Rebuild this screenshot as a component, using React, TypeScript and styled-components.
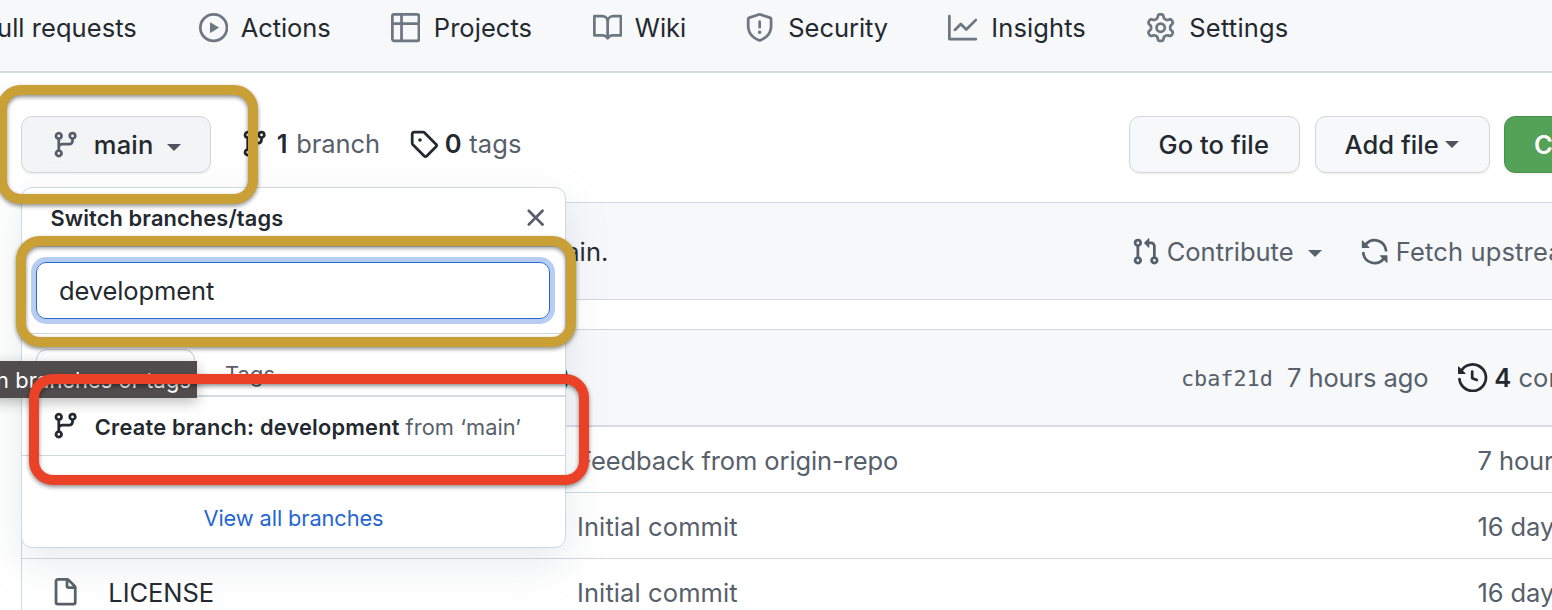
import React from "react";
import styled, { createGlobalStyle, css } from "styled-components";

const GlobalStyle = createGlobalStyle`
  * { box-sizing: border-box; }
  html, body { margin: 0; overflow: hidden; background: #fff; }
  body { font-family: Inter, "Liberation Sans", sans-serif; font-size: 25.5px; color: #24292f; }
`;

const color = {
  fg: "#24292f",
  muted: "#57606a",
  icon: "#6e7781",
  border: "#d0d7de",
  subtle: "#f6f8fa",
  link: "#2566d2",
};

const paths = {
  branch:
    "M11.75 2.5a.75.75 0 100 1.5.75.75 0 000-1.5zm-2.25.75a2.25 2.25 0 113 2.122V6A2.5 2.5 0 0110 8.5H6a1 1 0 00-1 1v1.128a2.251 2.251 0 11-1.5 0V5.372a2.25 2.25 0 111.5 0v1.836A2.492 2.492 0 016 7h4a1 1 0 001-1v-.628A2.25 2.25 0 019.5 3.25zM4.25 12a.75.75 0 100 1.5.75.75 0 000-1.5zM3.5 3.25a.75.75 0 111.5 0 .75.75 0 01-1.5 0z",
  play: "M1.5 8a6.5 6.5 0 1113 0 6.5 6.5 0 01-13 0zM8 0a8 8 0 100 16A8 8 0 008 0zM6.379 5.227A.25.25 0 006 5.442v5.117a.25.25 0 00.379.214l4.264-2.559a.25.25 0 000-.428L6.379 5.227z",
  table:
    "M1.75 0A1.75 1.75 0 000 1.75v12.5C0 15.216.784 16 1.75 16h12.5A1.75 1.75 0 0016 14.25V1.75A1.75 1.75 0 0014.25 0H1.75zM1.5 1.75a.25.25 0 01.25-.25H5V5H1.5V1.75zM6.5 1.5V5h8V1.75a.25.25 0 00-.25-.25H6.5zM14.5 6.5h-8v8h7.75a.25.25 0 00.25-.25V6.5zM5 14.5v-8H1.5v7.75c0 .138.112.25.25.25H5z",
  book: "M0 1.75A.75.75 0 01.75 1h4.253c1.227 0 2.317.59 3 1.501A3.744 3.744 0 0111.006 1h4.245a.75.75 0 01.75.75v10.5a.75.75 0 01-.75.75h-4.507a2.25 2.25 0 00-1.591.659l-.622.621a.75.75 0 01-1.06 0l-.622-.621A2.25 2.25 0 005.258 13H.75a.75.75 0 01-.75-.75V1.75zm8.755 3a2.25 2.25 0 012.25-2.25H14.5v9h-3.757c-.71 0-1.4.201-1.992.572l.004-7.322zm-1.504 7.324l.004-5.073-.002-2.253A2.25 2.25 0 005.003 2.5H1.5v9h3.757a3.75 3.75 0 011.994.574z",
  shield:
    "M7.467.133a1.75 1.75 0 011.066 0l5.25 1.68A1.75 1.75 0 0115 3.48V7c0 1.566-.32 3.182-1.303 4.682-.983 1.498-2.585 2.813-5.032 3.855a1.7 1.7 0 01-1.33 0c-2.447-1.042-4.049-2.357-5.032-3.855C1.32 10.182 1 8.566 1 7V3.48a1.75 1.75 0 011.217-1.667l5.25-1.68zm.61 1.429a.25.25 0 00-.153 0l-5.25 1.68a.25.25 0 00-.174.238V7c0 1.358.275 2.666 1.057 3.86.784 1.194 2.121 2.34 4.366 3.297a.2.2 0 00.154 0c2.245-.956 3.582-2.104 4.366-3.298C13.225 9.666 13.5 8.36 13.5 7V3.48a.25.25 0 00-.174-.237l-5.25-1.68zM9 10.5a1 1 0 11-2 0 1 1 0 012 0zm-.25-5.75a.75.75 0 10-1.5 0v3a.75.75 0 001.5 0v-3z",
  graph:
    "M1.5 1.75a.75.75 0 00-1.5 0v12.5c0 .414.336.75.75.75h14.5a.75.75 0 000-1.5H1.5V1.75zm14.28 2.53a.75.75 0 00-1.06-1.06L10 7.94 7.53 5.47a.75.75 0 00-1.06 0L3.22 8.72a.75.75 0 001.06 1.06L7 7.06l2.47 2.47a.75.75 0 001.06 0l5.25-5.25z",
  gear: "M7.429 1.525a6.593 6.593 0 011.142 0c.036.003.108.036.137.146l.289 1.105c.147.56.55.967.997 1.189.174.086.341.183.501.29.417.278.97.423 1.53.27l1.102-.303c.11-.03.175.016.195.046.219.31.41.641.573.989.014.031.022.11-.059.19l-.815.806c-.411.406-.562.957-.53 1.456a4.588 4.588 0 010 .582c-.032.499.119 1.05.53 1.456l.815.806c.08.08.073.159.059.19a6.494 6.494 0 01-.573.99c-.02.029-.086.074-.195.045l-1.103-.303c-.559-.153-1.112-.008-1.529.27-.16.107-.327.204-.5.29-.449.222-.851.628-.998 1.189l-.289 1.105c-.029.11-.101.143-.137.146a6.613 6.613 0 01-1.142 0c-.036-.003-.108-.037-.137-.146l-.289-1.105c-.147-.56-.55-.967-.997-1.189a4.502 4.502 0 01-.501-.29c-.417-.278-.97-.423-1.53-.27l-1.102.303c-.11.03-.175-.016-.195-.046a6.492 6.492 0 01-.573-.989c-.014-.031-.022-.11.059-.19l.815-.806c.411-.406.562-.957.53-1.456a4.587 4.587 0 010-.582c.032-.499-.119-1.05-.53-1.456l-.815-.806c-.08-.08-.073-.159-.059-.19a6.44 6.44 0 01.573-.99c.02-.029.086-.075.195-.045l1.103.303c.559.153 1.112.008 1.529-.27.16-.107.327-.204.5-.29.449-.222.851-.628.998-1.189l.289-1.105c.029-.11.101-.143.137-.146zM8 0c-.236 0-.47.01-.701.03-.743.065-1.29.615-1.458 1.261l-.29 1.106c-.017.066-.078.158-.211.224a5.994 5.994 0 00-.668.386c-.123.082-.233.09-.3.071L3.27 2.776c-.644-.177-1.392.02-1.82.63a7.977 7.977 0 00-.704 1.217c-.315.675-.111 1.422.363 1.891l.815.806c.05.048.098.147.088.294a6.084 6.084 0 000 .772c.01.147-.038.246-.088.294l-.815.806c-.474.469-.678 1.216-.363 1.891.2.428.436.835.704 1.218.428.609 1.176.806 1.82.63l1.103-.303c.066-.019.176-.011.299.071.213.143.436.272.668.386.133.066.194.158.212.224l.289 1.106c.169.646.715 1.196 1.458 1.26a8.094 8.094 0 001.402 0c.743-.064 1.29-.614 1.458-1.26l.29-1.106c.017-.066.078-.158.211-.224a5.98 5.98 0 00.668-.386c.123-.082.233-.09.3-.071l1.102.302c.644.177 1.392-.02 1.82-.63.268-.382.505-.789.704-1.217.315-.675.111-1.422-.364-1.891l-.814-.806c-.05-.048-.098-.147-.088-.294a6.1 6.1 0 000-.772c-.01-.147.039-.246.088-.294l.814-.806c.475-.469.679-1.216.364-1.891a7.992 7.992 0 00-.704-1.218c-.428-.609-1.176-.806-1.82-.63l-1.103.303c-.066.019-.176.011-.299-.071a5.991 5.991 0 00-.668-.386c-.133-.066-.194-.158-.212-.224L10.16 1.29C9.99.645 9.444.095 8.701.031A8.094 8.094 0 008 0zm1.5 8a1.5 1.5 0 11-3 0 1.5 1.5 0 013 0zM11 8a3 3 0 11-6 0 3 3 0 016 0z",
  tag: "M2.5 7.775V2.75a.25.25 0 01.25-.25h5.025a.25.25 0 01.177.073l6.25 6.25a.25.25 0 010 .354l-5.025 5.025a.25.25 0 01-.354 0l-6.25-6.25a.25.25 0 01-.073-.177zm-1.5 0V2.75C1 1.784 1.784 1 2.75 1h5.025c.464 0 .91.184 1.238.513l6.25 6.25a1.75 1.75 0 010 2.474l-5.026 5.026a1.75 1.75 0 01-2.474 0l-6.25-6.25A1.75 1.75 0 011 7.775zM6 5a1 1 0 100 2 1 1 0 000-2z",
  x: "M3.72 3.72a.75.75 0 011.06 0L8 6.94l3.22-3.22a.75.75 0 111.06 1.06L9.06 8l3.22 3.22a.75.75 0 11-1.06 1.06L8 9.06l-3.22 3.22a.75.75 0 01-1.06-1.06L6.94 8 3.72 4.78a.75.75 0 010-1.06z",
  pull: "M7.177 3.073L9.573.677A.25.25 0 0110 .854v4.792a.25.25 0 01-.427.177L7.177 3.427a.25.25 0 010-.354zM3.75 2.5a.75.75 0 100 1.5.75.75 0 000-1.5zm-2.25.75a2.25 2.25 0 113 2.122v5.256a2.251 2.251 0 11-1.5 0V5.372A2.25 2.25 0 011.5 3.25zM11 2.5h-1V4h1a1 1 0 011 1v5.628a2.251 2.251 0 101.5 0V5A2.5 2.5 0 0011 2.5zm1 10.25a.75.75 0 111.5 0 .75.75 0 01-1.5 0zM3.75 12a.75.75 0 100 1.5.75.75 0 000-1.5z",
  sync: "M8 2.5a5.487 5.487 0 00-4.131 1.869l1.204 1.204A.25.25 0 014.896 6H1.25A.25.25 0 011 5.75V2.104a.25.25 0 01.427-.177l1.38 1.38A7.001 7.001 0 0114.95 7.16a.75.75 0 11-1.49.178A5.501 5.501 0 008 2.5zM1.705 8.005a.75.75 0 01.834.656 5.501 5.501 0 009.592 2.97l-1.204-1.204a.25.25 0 01.177-.427h3.646a.25.25 0 01.25.25v3.646a.25.25 0 01-.427.177l-1.38-1.38A7.001 7.001 0 011.05 8.84a.75.75 0 01.656-.834z",
  history:
    "M1.643 3.143L.427 1.927A.25.25 0 000 2.104V5.75c0 .138.112.25.25.25h3.646a.25.25 0 00.177-.427L2.715 4.215a6.5 6.5 0 11-1.18 4.458.75.75 0 10-1.493.154 8.001 8.001 0 101.6-5.684zM7.75 4a.75.75 0 01.75.75v2.992l2.028.812a.75.75 0 01-.557 1.392l-2.5-1A.75.75 0 017 8.25v-3.5A.75.75 0 017.75 4z",
  file: "M3.75 1.5a.25.25 0 00-.25.25v11.5c0 .138.112.25.25.25h8.5a.25.25 0 00.25-.25V6H9.75A1.75 1.75 0 018 4.25V1.5H3.75zm5.75.56v2.19c0 .138.112.25.25.25h2.19L9.5 2.06zM2 1.75C2 .784 2.784 0 3.75 0h5.086c.464 0 .909.184 1.237.513l3.414 3.414c.329.328.513.773.513 1.237v8.086A1.75 1.75 0 0112.25 15h-8.5A1.75 1.75 0 012 13.25V1.75z",
};

const Svg = styled.svg<{ $c: string }>`
  flex: none;
  width: 29.3px;
  height: 29.3px;
  fill: ${(p) => p.$c};
  fill-rule: evenodd;
`;

const Icon = ({ name, c = color.fg }: { name: keyof typeof paths; c?: string }) => (
  <Svg viewBox="0 0 16 16" $c={c}>
    <path d={paths[name]} />
  </Svg>
);

const Text = styled.span<{ $c?: string; $w?: number; $ls?: number; $ml?: number; $small?: boolean }>`
  flex: none;
  white-space: pre;
  color: ${(p) => p.$c ?? color.fg};
  font-weight: ${(p) => p.$w ?? 430};
  letter-spacing: ${(p) => p.$ls ?? 0.15}px;
  margin-left: ${(p) => p.$ml ?? 0}px;
  ${(p) =>
    p.$small &&
    css`
      font-size: 21.8px;
    `}
`;

const Caret = styled.span<{ $ml: number; $drop?: number; $c?: string }>`
  flex: none;
  border: 7px solid transparent;
  border-top-color: ${(p) => p.$c ?? color.muted};
  border-bottom: 0;
  margin-left: ${(p) => p.$ml}px;
  margin-top: ${(p) => p.$drop ?? 0}px;
`;

const Page = styled.div`
  position: relative;
  width: 1552px;
  height: 610px;
  overflow: hidden;
  background: #fff;
`;

const Nav = styled.nav`
  display: grid;
  grid-template-columns: 200px 192px 201.5px 152.5px 202.5px 198px 200px;
  align-items: center;
  height: 73px;
  padding-bottom: 15px;
  background: ${color.subtle};
  border-bottom: 2px solid #d5dce2;
`;

const NavItem = styled.a<{ $clipped?: boolean }>`
  display: flex;
  align-items: center;
  height: 36px;
  margin-left: ${(p) => (p.$clipped ? -3 : -1)}px;

  ${Text} {
    padding-bottom: 1.5px;
  }
`;

const Toolbar = styled.div`
  display: flex;
  align-items: center;
  height: 129px;
  padding: 14px 0 0 21px;
`;

const Button = styled.button<{ $wd: number; $variant?: "active" | "primary"; $pl: number }>`
  flex: none;
  display: flex;
  align-items: center;
  width: ${(p) => p.$wd}px;
  height: 57px;
  padding: 0 0 0 ${(p) => p.$pl}px;
  font: inherit;
  border: 1px solid ${(p) => (p.$variant === "primary" ? "#4a9150" : "#d3d6d9")};
  border-radius: 11px;
  background: ${(p) => (p.$variant === "primary" ? "#54a257" : p.$variant === "active" ? "#f3f4f6" : color.subtle)};
  box-shadow: 0 2px 0 rgba(31, 35, 40, 0.04);
`;

const Stat = styled.div<{ $ml: number; $lift?: boolean }>`
  display: flex;
  align-items: center;
  margin-left: ${(p) => p.$ml}px;
  ${(p) =>
    p.$lift &&
    css`
      padding-bottom: 1px;
      ${Text} {
        padding-bottom: 1.5px;
      }
    `}
`;

const Actions = styled.div`
  display: flex;
  gap: 14.5px;
  margin-left: auto;
  margin-right: -90px;
`;

const Panel = styled.section`
  margin-left: 21px;
  width: 1700px;
  border: 1px solid ${color.border};
  border-radius: 11px;
`;

const Compare = styled(Panel)`
  display: flex;
  align-items: center;
  height: 98px;
  padding-top: 1px;
  margin-bottom: 29px;
  background: ${color.subtle};
`;

const Cell = styled.div<{ $wd: number; $end?: boolean }>`
  flex: none;
  display: flex;
  align-items: center;
  justify-content: ${(p) => (p.$end ? "flex-end" : "flex-start")};
  width: ${(p) => p.$wd}px;
`;

const CommitBar = styled.header`
  display: flex;
  align-items: center;
  height: 97px;
  background: ${color.subtle};
  border-bottom: 2px solid #d5dbe1;
  border-radius: 11px 11px 0 0;
`;

const Sha = styled.span`
  font-family: "DejaVu Sans Mono", monospace;
  font-size: 21.8px;
  color: ${color.muted};
  width: 106px;
  padding-top: 2px;
`;

const FileRow = styled.div<{ $drop: number }>`
  display: flex;
  align-items: center;
  height: 66px;
  padding: ${(p) => p.$drop}px 0 0 29px;
  border-bottom: 1px solid ${color.border};
`;

const Popover = styled.aside`
  position: absolute;
  left: 21px;
  top: 187px;
  width: 545px;
  height: 361px;
  background: #fff;
  border: 1px solid ${color.border};
  border-radius: 11px;
  box-shadow: 0 15px 44px rgba(140, 149, 159, 0.2);
`;

const PopHeader = styled.div`
  display: flex;
  align-items: center;
  justify-content: space-between;
  height: 59px;
  padding: 1px 15px 0 28.5px;
  border-bottom: 1px solid ${color.border};
`;

const Filter = styled.div`
  height: 87px;
  padding: 15px 15px 15px 14px;
  border-bottom: 1px solid ${color.border};
`;

const Input = styled.div`
  display: flex;
  align-items: center;
  height: 57px;
  padding-left: 22px;
  border: 1px solid #2668d8;
  border-radius: 10px;
  box-shadow: 0 0 0 5px #b8cef1;
`;

const Tabs = styled.div`
  display: flex;
  height: 63px;
  padding: 15px 14px 0;
  border-bottom: 2px solid #d5dbe1;
`;

const Tab = styled.div<{ $selected?: boolean }>`
  display: flex;
  align-items: center;
  padding: 3px 30px 0;
  border-radius: 11px 11px 0 0;
  ${(p) =>
    p.$selected &&
    css`
      width: 159px;
      border: 1px solid ${color.border};
      border-bottom: 0;
    `}
`;

const CreateRow = styled.div`
  display: flex;
  align-items: center;
  height: 59px;
  padding: 0 0 1px 29px;
  border-bottom: 1px solid ${color.border};
`;

const CreateLabel = styled.span`
  display: flex;
  padding-top: 3px;
`;

const Footer = styled.div`
  display: flex;
  justify-content: center;
  padding-top: 49px;
`;

const Tooltip = styled.div`
  position: absolute;
  left: -70px;
  top: 361px;
  width: 267px;
  height: 37px;
  display: flex;
  align-items: center;
  justify-content: flex-end;
  padding-right: 6px;
  background: #504b4c;
  box-shadow: 0 4px 14px rgba(0, 0, 0, 0.28);
`;

const Highlight = styled.div<{ $x: number; $y: number; $wd: number; $h: number; $c: string }>`
  position: absolute;
  left: ${(p) => p.$x}px;
  top: ${(p) => p.$y}px;
  width: ${(p) => p.$wd}px;
  height: ${(p) => p.$h}px;
  border: 10px solid ${(p) => p.$c};
  border-radius: 24px;
  filter: drop-shadow(0 2px 2px rgba(0, 0, 0, 0.45));
`;

const tabs: [keyof typeof paths, string, number, number][] = [
  ["play", "Actions", -0.1, 12.5],
  ["table", "Projects", 0.05, 13.5],
  ["book", "Wiki", 0, 13],
  ["shield", "Security", -0.05, 14],
  ["graph", "Insights", 0.1, 14.5],
  ["gear", "Settings", 0.2, 14.5],
];

const files: [string, string, string, number][] = [
  ["", "Feedback from origin-repo", "7 hours ago", -0.1],
  ["", "Initial commit", "16 days ago", 0.1],
  ["LICENSE", "Initial commit", "16 days ago", 0.1],
];

export default function App() {
  return (
    <Page>
      <GlobalStyle />
      <Nav>
        <NavItem $clipped>
          <Text $ls={0.05}>ull requests</Text>
        </NavItem>
        {tabs.map(([icon, label, ls, ml]) => (
          <NavItem key={label}>
            <Icon name={icon} c={color.icon} />
            <Text $ml={ml} $ls={ls}>
              {label}
            </Text>
          </NavItem>
        ))}
      </Nav>

      <Toolbar>
        <Button $wd={190} $pl={29} $variant="active">
          <Icon name="branch" c={color.muted} />
          <Text $w={530} $ml={13.5} $ls={0.2}>
            main
          </Text>
          <Caret $ml={13} $drop={5} $c="#4e545c" />
        </Button>
        <Stat $ml={29} $lift>
          <Icon name="branch" />
          <Text $w={600} $ml={7.5}>
            1
          </Text>
          <Text $c={color.muted} $ml={8.5} $ls={-0.1}>
            branch
          </Text>
        </Stat>
        <Stat $ml={29} $lift>
          <Icon name="tag" />
          <Text $w={600} $ml={6.5}>
            0
          </Text>
          <Text $c={color.muted} $ml={7.5} $ls={0.1}>
            tags
          </Text>
        </Stat>
        <Actions>
          <Button $wd={171} $pl={28.5}>
            <Text $w={530} $ls={0.1}>
              Go to file
            </Text>
          </Button>
          <Button $wd={175} $pl={29}>
            <Text $w={530} $ls={0.05}>
              Add file
            </Text>
            <Caret $ml={6} $c="#4e545c" />
          </Button>
          <Button $wd={138} $pl={29} $variant="primary">
            <Text $w={600} $c="#fff">
              Code
            </Text>
          </Button>
        </Actions>
      </Toolbar>

      <Compare>
        <Cell $wd={586.5} $end>
          <Text $ls={0.1}>main.</Text>
        </Cell>
        <Cell $wd={522} />
        <Icon name="pull" c={color.muted} />
        <Text $c={color.muted} $ml={7} $ls={-0.05}>
          Contribute
        </Text>
        <Caret $ml={15} $drop={4} />
        <Stat $ml={37.5}>
          <Icon name="sync" c={color.muted} />
          <Text $c={color.muted} $ml={6.5}>
            Fetch upstream
          </Text>
        </Stat>
      </Compare>

      <Panel>
        <CommitBar>
          <Cell $wd={549} $end>
            <Text>)</Text>
          </Cell>
          <Cell $wd={610} />
          <Sha>cbaf21d</Sha>
          <Text $c={color.muted} $ls={-0.1}>
            7 hours ago
          </Text>
          <Stat $ml={30}>
            <Icon name="history" />
            <Text $w={600} $ml={6.5}>
              4
            </Text>
            <Text $c={color.muted} $ml={7}>
              commits
            </Text>
          </Stat>
        </CommitBar>
        {files.map(([name, message, age, ls], i) => (
          <FileRow key={i} $drop={i === 0 ? 1 : 2}>
            <Cell $wd={526}>
              {name && (
                <>
                  <Icon name="file" c={color.muted} />
                  <Text $ml={28} $ls={-0.05}>
                    {name}
                  </Text>
                </>
              )}
            </Cell>
            <Cell $wd={900.5}>
              <Text $c={color.muted} $ls={ls}>
                {message}
              </Text>
            </Cell>
            <Text $c={color.muted} $ls={-0.1}>
              {age}
            </Text>
          </FileRow>
        ))}
      </Panel>

      <Popover>
        <PopHeader>
          <Text $small $w={600} $ls={0.13}>
            Switch branches/tags
          </Text>
          <Icon name="x" c={color.muted} />
        </PopHeader>
        <Filter>
          <Input>
            <Text $ls={-0.1}>development</Text>
          </Input>
        </Filter>
        <Tabs>
          <Tab $selected />
          <Tab>
            <Text $small $c={color.muted}>
              Tags
            </Text>
          </Tab>
        </Tabs>
        <CreateRow>
          <Icon name="branch" />
          <CreateLabel>
            <Text $small $w={600} $ml={14.5} $ls={0.2}>
              Create branch: development
            </Text>
            <Text $small $c={color.muted} $ml={6} $ls={0.08}>
              from ‘main’
            </Text>
          </CreateLabel>
        </CreateRow>
        <Footer>
          <Text $small $c={color.link} $ls={-0.1}>
            View all branches
          </Text>
        </Footer>
      </Popover>

      <Tooltip>
        <Text $small $c="#fff" $ls={0.1}>
          Switch branches or tags
        </Text>
      </Tooltip>

      <Highlight $x={-3} $y={85} $wd={261} $h={119} $c="#c8a035" />
      <Highlight $x={16} $y={236} $wd={560} $h={111} $c="#c8a035" />
      <Highlight $x={29} $y={374} $wd={560} $h={111} $c="#eb4126" />
    </Page>
  );
}
